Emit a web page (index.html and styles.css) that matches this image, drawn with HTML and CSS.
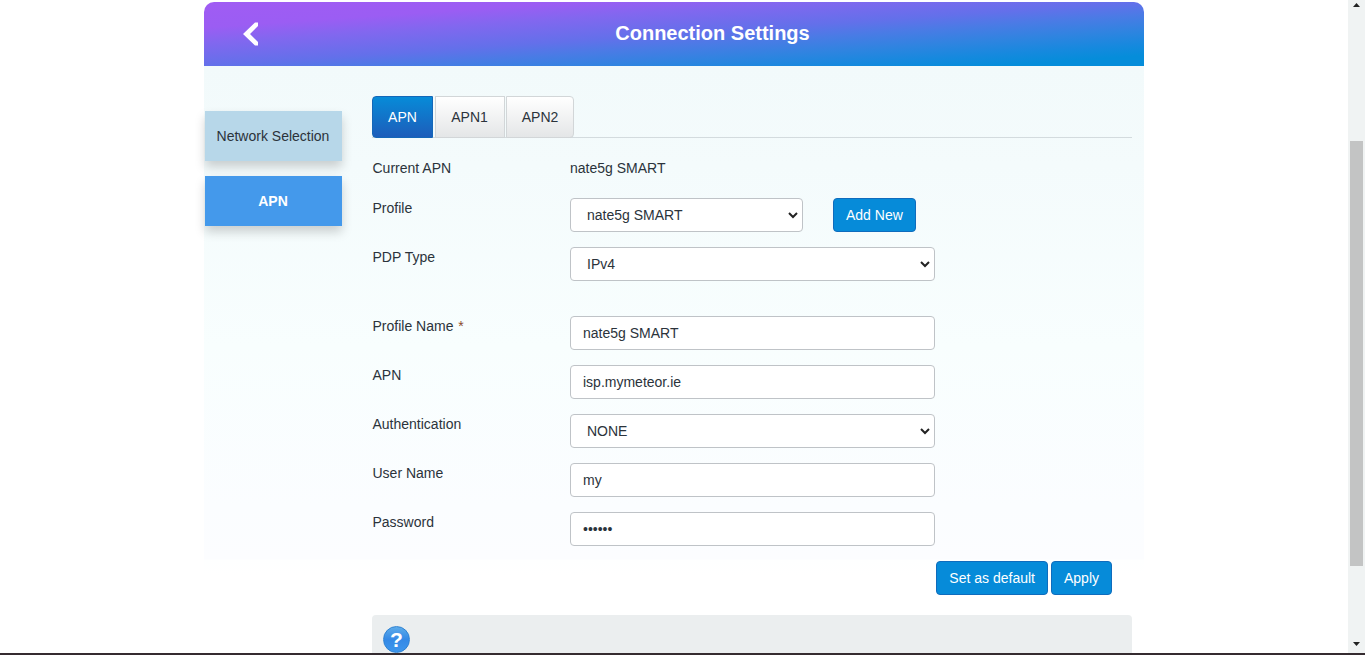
FILE: index.html
```html
<!DOCTYPE html>
<html lang="en">
<head>
    <meta charset="UTF-8">
    <meta name="viewport" content="width=device-width, initial-scale=1.0">
    <title>Connection Settings</title>
    <link rel="stylesheet" href="styles.css">
</head>
<body>
    <div class="viewport">
        <div class="page">
            <div class="container">
                <div class="header">
                    <a href="#" class="back">
                        <svg width="16" height="24" viewBox="0 0 16 24"><path d="M12 0.5 H15 V4 L7 12 L15 20 V23.5 H12 L0 12 Z" fill="#fff"/></svg>
                    </a>
                    <h1>Connection Settings</h1>
                </div>
                <div class="main">
                    <div class="sidebar">
                        <a href="#" class="side-item">Network Selection</a>
                        <a href="#" class="side-item active">APN</a>
                    </div>
                    <div class="content">
                        <div class="tabs">
                            <a href="#" class="tab active">APN</a>
                            <a href="#" class="tab">APN1</a>
                            <a href="#" class="tab">APN2</a>
                        </div>
                        <form class="form">
                            <div class="row current">
                                <label>Current APN</label>
                                <span>nate5g SMART</span>
                            </div>
                            <div class="row">
                                <label>Profile</label>
                                <div class="select short">
                                    <span>nate5g SMART</span>
                                    <svg width="10" height="7" viewBox="0 0 10 7"><path d="M1 1 L5 5 L9 1" fill="none" stroke="#222" stroke-width="2"/></svg>
                                </div>
                                <button type="button" class="btn add">Add New</button>
                            </div>
                            <div class="row pdp">
                                <label>PDP Type</label>
                                <div class="select">
                                    <span>IPv4</span>
                                    <svg width="10" height="7" viewBox="0 0 10 7"><path d="M1 1 L5 5 L9 1" fill="none" stroke="#222" stroke-width="2"/></svg>
                                </div>
                            </div>
                            <div class="row">
                                <label>Profile Name <i class="required">*</i></label>
                                <input type="text" value="nate5g SMART">
                            </div>
                            <div class="row">
                                <label>APN</label>
                                <input type="text" value="isp.mymeteor.ie">
                            </div>
                            <div class="row">
                                <label>Authentication</label>
                                <div class="select">
                                    <span>NONE</span>
                                    <svg width="10" height="7" viewBox="0 0 10 7"><path d="M1 1 L5 5 L9 1" fill="none" stroke="#222" stroke-width="2"/></svg>
                                </div>
                            </div>
                            <div class="row">
                                <label>User Name</label>
                                <input type="text" value="my">
                            </div>
                            <div class="row">
                                <label>Password</label>
                                <div class="password">••••••</div>
                            </div>
                            <div class="actions">
                                <button type="button" class="btn">Set as default</button>
                                <button type="button" class="btn">Apply</button>
                            </div>
                        </form>
                        <div class="help">
                            <div class="help-icon">?</div>
                        </div>
                    </div>
                </div>
            </div>
        </div>
        <div class="scrollbar">
            <svg class="arrow" width="7" height="4" viewBox="0 0 7 4"><path d="M0 4 L3.5 0 L7 4 Z" fill="#222"/></svg>
            <div class="thumb"></div>
            <svg class="arrow" width="7" height="4" viewBox="0 0 7 4"><path d="M0 0 L3.5 4 L7 0 Z" fill="#222"/></svg>
        </div>
    </div>
</body>
</html>
```
FILE: styles.css
```css
* {
    box-sizing: border-box;
}
body {
    margin: 0;
    height: 100vh;
    overflow: hidden;
    font-family: "Liberation Sans", Arial, sans-serif;
    font-size: 14px;
    line-height: 20px;
    color: #2b333b;
    background: #fff;
}
a {
    color: inherit;
    text-decoration: none;
}
.viewport {
    display: flex;
    height: 100vh;
    border-bottom: 2px solid #352b30;
    overflow: hidden;
}
.page {
    flex: 1;
    padding-top: 2px;
    overflow: hidden;
}
.container {
    width: 940px;
    margin: 0 auto 0 204px;
}
.header {
    display: flex;
    align-items: center;
    height: 64px;
    border-radius: 10px 10px 0 0;
    background: linear-gradient(to bottom right, #a05cf3 0%, #9b5df3 20%, #8267ef 32%, #6370ea 50%, #4a7be5 60%, #2f84e0 72%, #1689de 83%, #058dda 92%);
    color: #fff;
}
.back {
    display: flex;
    margin-left: 39px;
    width: 16px;
}
.header h1 {
    flex: 1;
    margin: 0 -22px 2px 0;
    font-size: 20px;
    line-height: 24px;
    text-align: center;
}
.main {
    display: flex;
    height: 620px;
    background: linear-gradient(#f2fafb 0, #f4fbfc 100px, #f8fefe 280px, #fbfdff 440px, #fcfdff 493px, #feffff 494px, #fff 510px);
}
.sidebar {
    width: 138px;
    padding: 45px 0 0 1px;
}
.side-item {
    display: block;
    height: 50px;
    margin-bottom: 15px;
    padding-right: 1px;
    line-height: 50px;
    text-align: center;
    white-space: nowrap;
    background: #b7d7e9;
    box-shadow: 0 6px 10px rgba(0, 0, 0, 0.18);
}
.side-item.active {
    background: #4499eb;
    color: #fff;
    font-weight: bold;
}
.content {
    width: 760px;
    margin-left: 30px;
    padding-top: 30px;
}
.tabs {
    display: flex;
    gap: 1px;
    height: 42px;
    border-bottom: 1px solid #d3dbde;
}
.tab {
    height: 42px;
    width: 70px;
    padding-right: 1px;
    border: 1px solid #d2d6d8;
    line-height: 40px;
    text-align: center;
    background: linear-gradient(#fff, #e4e6e7);
}
.tab:last-child {
    width: 68px;
    padding-right: 0;
    border-radius: 0 4px 4px 0;
}
.tab.active {
    width: 61px;
    margin-right: 1px;
    padding-right: 0;
    border-color: #1467b8;
    border-radius: 4px 0 0 4px;
    background: linear-gradient(#078bd8, #1d5dba);
    color: #fff;
}
.row {
    display: flex;
    height: 34px;
    margin-bottom: 15px;
}
.row label {
    width: 198px;
    padding-left: 0.5px;
}
.row.current {
    height: 20px;
    margin: 20px 0;
}
.row.pdp {
    margin-bottom: 35px;
}
.required {
    margin-left: 1px;
    color: #8c4a2c;
    font-style: normal;
}
.select,
.password,
.row input {
    width: 365px;
    height: 34px;
    padding: 0 12px;
    border: 1px solid #bfc3c7;
    border-radius: 4px;
    background: #fff;
    color: #2b333b;
    font: inherit;
    line-height: 32px;
    outline: none;
}
.select {
    display: flex;
    align-items: center;
    justify-content: space-between;
    padding: 0 4px 0 16px;
}
.select.short {
    width: 233px;
}
.btn {
    height: 34px;
    padding: 0 12px;
    border: 1px solid #0f6cbd;
    border-radius: 4px;
    background: #068bd9;
    color: #fff;
    font: inherit;
}
.btn.add {
    margin-left: 30px;
}
.actions {
    display: flex;
    justify-content: flex-end;
    gap: 3px;
    padding-right: 20px;
}
.help {
    height: 60px;
    margin-top: 20px;
    padding: 11px 0 0 11px;
    border-radius: 4px;
    background: #ebeeef;
}
.help-icon {
    width: 27px;
    height: 27px;
    border: 1px solid #2f82d2;
    border-radius: 50%;
    background: linear-gradient(#5cabea, #3489e6 50%, #3d96ec);
    color: #fff;
    font-size: 21px;
    font-weight: bold;
    line-height: 25px;
    text-align: center;
}
.scrollbar {
    display: flex;
    flex-direction: column;
    align-items: center;
    width: 17px;
    padding: 3px 0 7px;
    background: #f0f3f3;
}
.thumb {
    width: 13px;
    height: 425px;
    margin: 134px 0 auto;
    background: #c3c4c4;
}
```
